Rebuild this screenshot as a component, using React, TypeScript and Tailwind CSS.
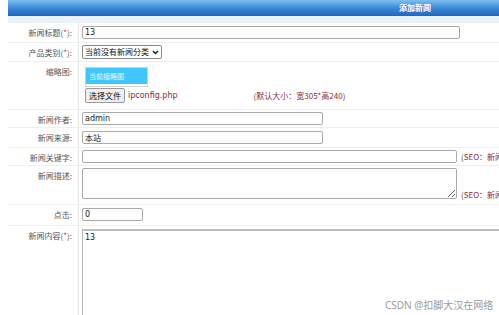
import React from 'react';

const cjk = '"Noto Sans CJK SC", "Noto Sans", sans-serif';
const latin = '"DejaVu Sans", "Noto Sans CJK SC", sans-serif';

function Label({ text, required }: { text: string; required?: boolean }) {
  return (
    <div className="w-[71px] shrink-0 border-r border-[#e6e6e6] pr-[6px] pt-[5px] text-right text-[8px] leading-[10px] text-[#555]">
      {text}
      {required && (
        <>
          (<span className="text-[#e03030]">*</span>)
        </>
      )}
      :
    </div>
  );
}

function Row({ children, className = '' }: { children: React.ReactNode; className?: string }) {
  return <div className={`flex border-b border-[#eeeeee] ${className}`}>{children}</div>;
}

const inputCls =
  'block h-[13px] rounded-[2px] border border-[#a9a9a9] bg-white px-[2px] text-[8px] leading-[11px] text-[#222] outline-none';

export default function App() {
  return (
    <div className="h-[315px] w-[499px] overflow-hidden bg-white pl-[8px]" style={{ fontFamily: cjk }}>
      {/* header */}
      <div className="relative h-[16px] bg-gradient-to-b from-[#7cc0f0] via-[#3b8ad8] to-[#1e66bd]">
        <div className="absolute left-[391px] top-[3px] text-[8px] font-bold leading-[10px] text-white">添加新闻</div>
      </div>
      <div className="h-[7px] bg-[#eaf3fb]" />

      <Row>
        <Label text="新闻标题" required />
        <div className="py-[3px] pl-[3px]">
          <input className={`${inputCls} w-[378px]`} defaultValue="13" style={{ fontFamily: latin }} />
        </div>
      </Row>

      <Row>
        <Label text="产品类别" required />
        <div className="py-[2px] pl-[3px]">
          <div className="flex h-[14px] items-center gap-[3px] whitespace-nowrap rounded-[2px] border border-[#888] bg-white px-[2px] text-[8px] text-[#111]">
            <span>当前没有新闻分类</span>
            <svg width="7" height="5" viewBox="0 0 7 5">
              <path d="M1 1 L3.5 3.5 L6 1" stroke="#111" strokeWidth="1.3" fill="none" />
            </svg>
          </div>
        </div>
      </Row>

      <Row>
        <Label text="缩略图" />
        <div className="pb-[6px] pl-[6px] pt-[5px]">
          <div className="w-[63px] border border-[#d0d0d0] bg-white pb-[2px]">
            <div className="flex h-[16px] items-center bg-[#3fc6fa] pl-[3px] text-[7px] text-[#e8f8ff]">当前缩略图</div>
          </div>
          <div className="mt-[1px] flex items-center">
            <div className="flex h-[15px] items-center rounded-[2px] border border-[#999] bg-[#efefef] px-[3px] text-[8px] text-[#111]">
              选择文件
            </div>
            <span className="ml-[3px] text-[8px] text-[#8a2c2c]" style={{ fontFamily: latin }}>
              ipconfig.php
            </span>
            <span className="ml-[76px] text-[8px] text-[#8a2c2c]">(默认大小：宽305*高240)</span>
          </div>
        </div>
      </Row>

      <Row>
        <Label text="新闻作者" />
        <div className="py-[2px] pl-[3px]">
          <input className={`${inputCls} w-[241px]`} defaultValue="admin" style={{ fontFamily: latin }} />
        </div>
      </Row>

      <Row>
        <Label text="新闻来源" />
        <div className="py-[3px] pl-[3px]">
          <input className={`${inputCls} w-[241px]`} defaultValue="本站" />
        </div>
      </Row>

      <Row>
        <Label text="新闻关键字" />
        <div className="flex items-center py-[2px] pl-[3px]">
          <input className={`${inputCls} w-[375px]`} />
          <span className="ml-[4px] whitespace-nowrap text-[8px] text-[#8a2c2c]">(SEO：新闻关键字)</span>
        </div>
      </Row>

      <Row>
        <Label text="新闻描述" />
        <div className="flex items-end pb-[5px] pl-[3px] pt-[2px]">
          <textarea className="block h-[31px] w-[375px] rounded-[2px] border border-[#a9a9a9] bg-white outline-none" />
          <span className="mb-[-2px] ml-[4px] whitespace-nowrap text-[8px] text-[#8a2c2c]">(SEO：新闻描述)</span>
        </div>
      </Row>

      <Row>
        <Label text="点击" />
        <div className="pb-[4px] pl-[3px] pt-[3px]">
          <input className={`${inputCls} w-[61px]`} defaultValue="0" style={{ fontFamily: latin }} />
        </div>
      </Row>

      <div className="relative flex">
        <Label text="新闻内容" required />
        <div className="pl-[3px] pt-[3px]">
          <div
            className="h-[100px] w-[430px] border border-[#b5b5b5] border-t-2 border-t-[#bdbdbd] px-[2px] pt-[1px] text-[8px] text-[#222]"
            style={{ fontFamily: latin }}
          >
            13
          </div>
        </div>
        <div className="absolute left-[377px] top-[72px] text-[10px] text-[#9a9a9a]" style={{ fontFamily: '"Noto Sans", "Noto Sans CJK SC", sans-serif' }}>
          CSDN @扣脚大汉在网络
        </div>
      </div>
    </div>
  );
}
